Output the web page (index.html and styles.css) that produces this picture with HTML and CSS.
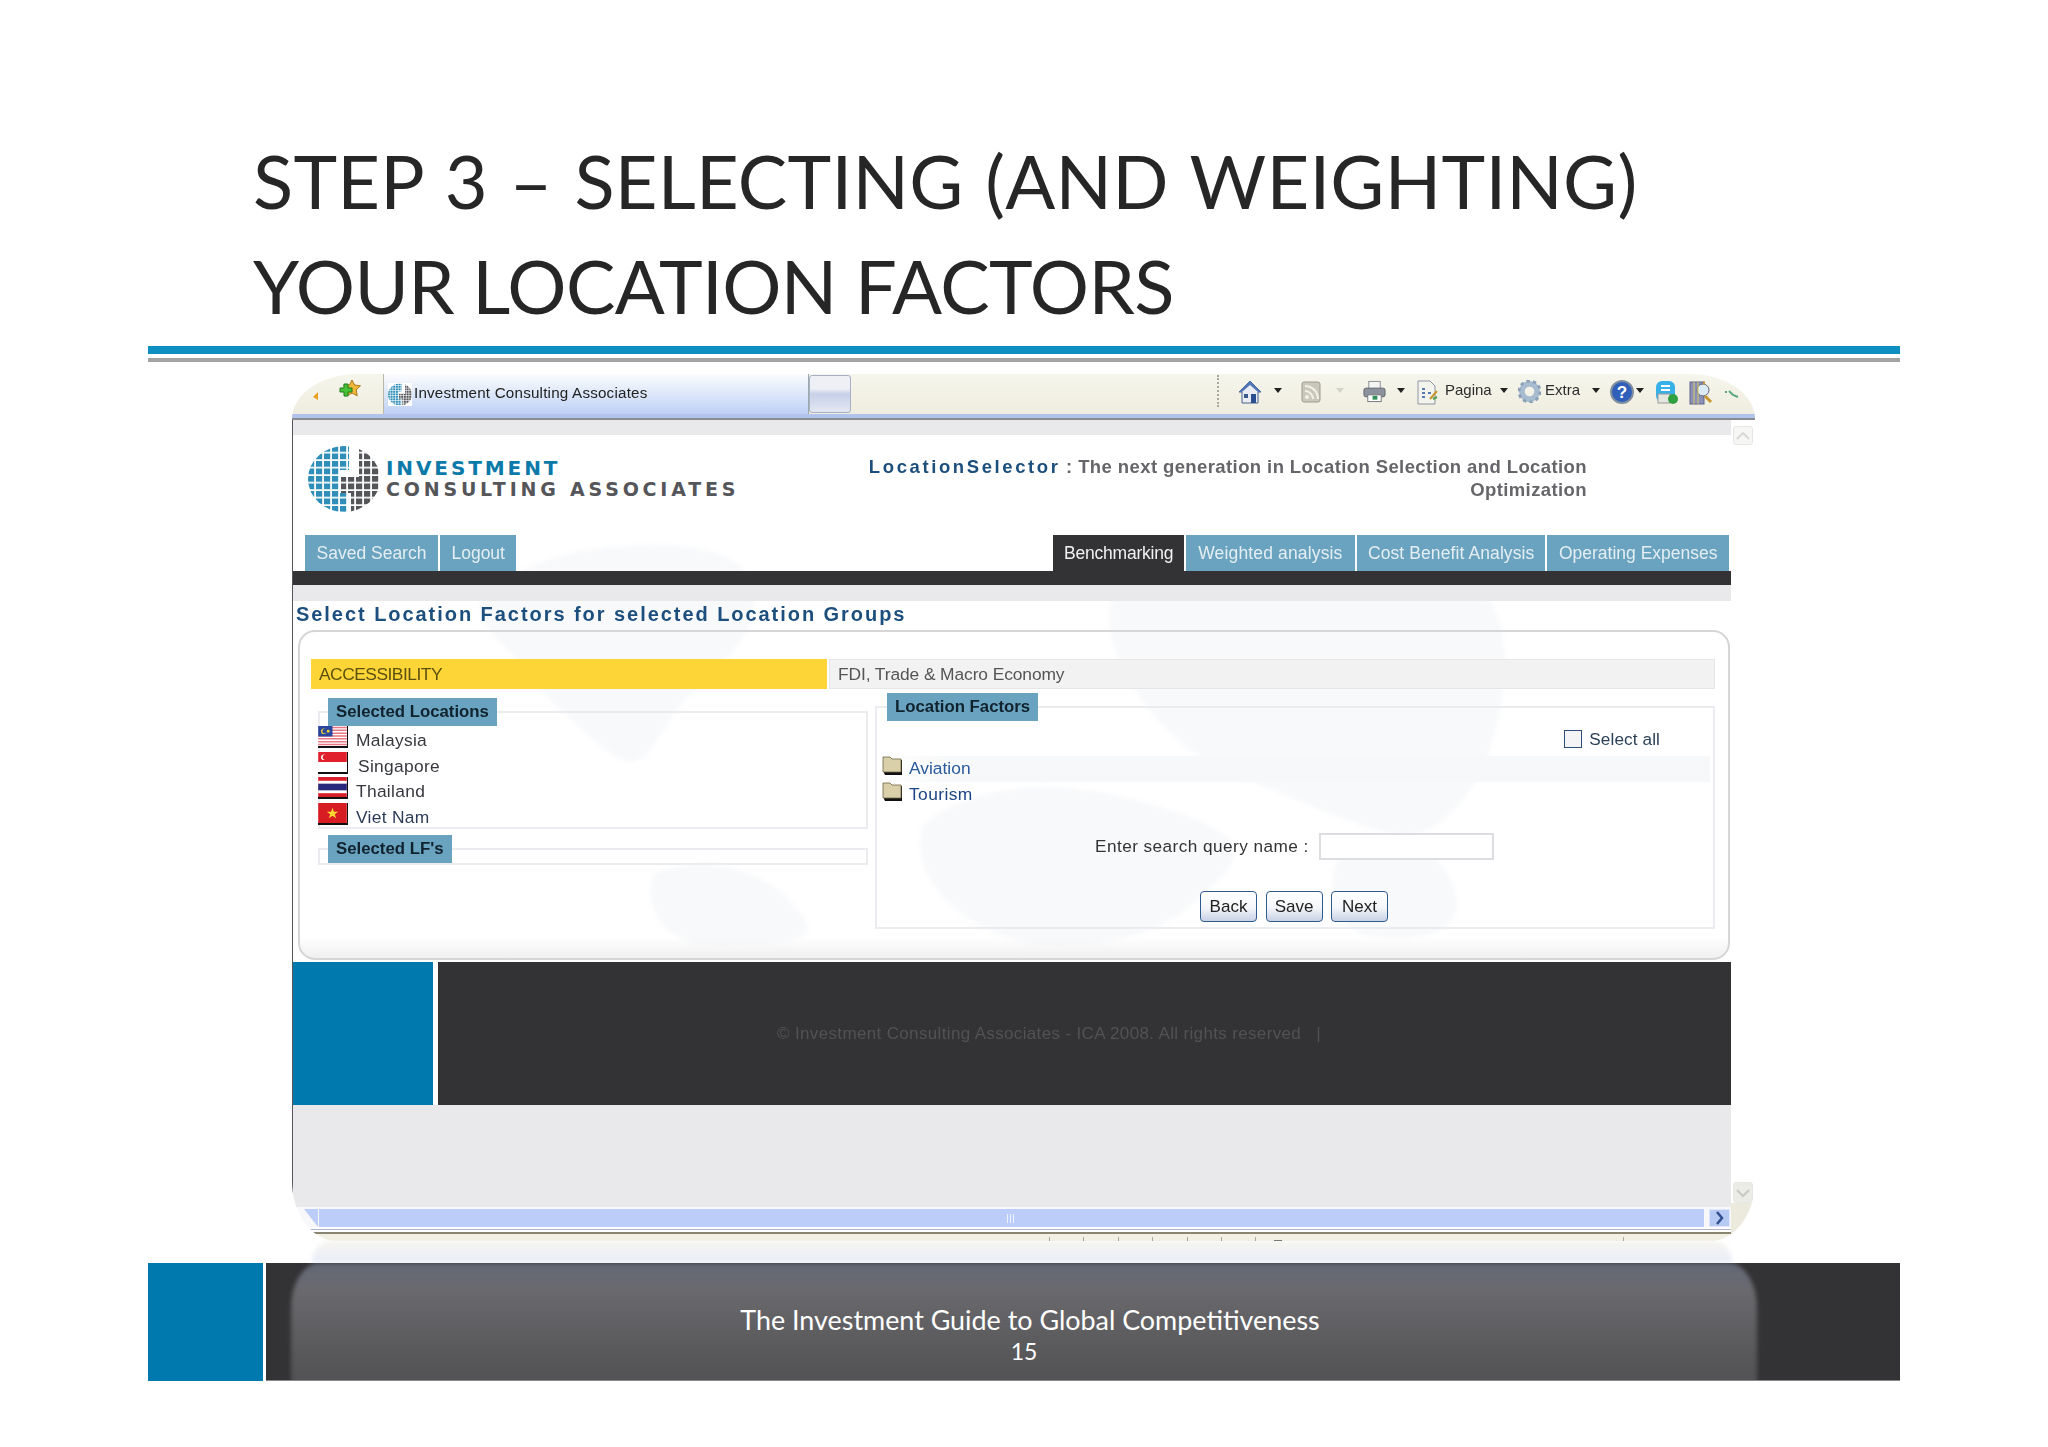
FILE: index.html
```html
<!DOCTYPE html>
<html lang="en">
<head>
<meta charset="utf-8">
<title>Step 3 - Selecting your location factors</title>
<link rel="stylesheet" href="styles.css">
</head>
<body>
<div class="slide">
  <h1 class="title"><span class="title-1">STEP 3 – SELECTING (AND WEIGHTING)</span><br><span class="title-2">YOUR LOCATION FACTORS</span></h1>
  <div class="rule-blue"></div>
  <div class="rule-grey"></div>

  <div class="window">
    <div class="browser">
      <div class="browser-main">
        <svg class="ic-back" viewBox="0 0 6 8"><path d="M5 0 L0 5 L5 8Z" fill="#e8a020"/></svg>
        <svg class="ic-fav" viewBox="0 0 24 20"><path d="M14 1 l2.500 5 6 .800 -4.300 4 1 6 -5.200 -2.800 -5.200 2.800 1-6 -4.300-4 6-.800Z" fill="#f0b838" stroke="#a87818"/><path d="M5 6h4v-4h4v4h4v4h-4v4H9v-4H5Z" transform="translate(-3 3)" fill="#48c038" stroke="#1c7a18"/></svg>
        <div class="tab-active">
          <svg class="ic-favicon" viewBox="0 0 72 66"><use href="#globe"/></svg>
          <span>Investment Consulting Associates</span>
        </div>
        <div class="tab-new"></div>
        <div class="tools">
          <div class="dots"></div>
          <svg class="ic" viewBox="0 0 24 24"><path d="M12 1 L23 12 H20 V23 H4 V12 H1Z" fill="#e9edf3" stroke="#46608c"/><path d="M12 1 L23 12 H20 L12 5 4 12 H1Z" fill="#5278b8"/><rect x="13" y="14" width="5" height="9" fill="#2a4f8e"/><rect x="6" y="14" width="4" height="4" fill="#3c5a8a"/></svg>
          <i class="arr a1"></i>
          <svg class="ic ic-rss" viewBox="0 0 20 22"><rect x="1" y="1" width="18" height="20" rx="2" fill="#c9c8bb" stroke="#9d9c90"/><circle cx="6" cy="16" r="2" fill="#f2f1e8"/><path d="M4 10a8 8 0 0 1 8 8M4 5a13 13 0 0 1 13 13" stroke="#f2f1e8" stroke-width="2" fill="none"/></svg>
          <i class="arr a2"></i>
          <svg class="ic ic-print" viewBox="0 0 24 23"><rect x="6" y="1" width="12" height="8" fill="#f4f4f4" stroke="#8a8f98"/><rect x="1" y="8" width="22" height="9" rx="2" fill="#8c929c" stroke="#5f646c"/><rect x="5" y="15" width="14" height="7" fill="#fff" stroke="#777"/><rect x="10" y="16" width="5" height="4" fill="#2f8f58"/></svg>
          <i class="arr a3"></i>
          <svg class="ic ic-page" viewBox="0 0 22 25"><path d="M1 1h12l5 5v18H1Z" fill="#f4f4ee" stroke="#8d93a3"/><path d="M5 9h3M5 13h3M5 17h3M11 13h3" stroke="#5a7ab0" stroke-width="2"/><path d="M13 19l7-8" stroke="#c89830" stroke-width="2"/><path d="M16 19l4-2" stroke="#50a050" stroke-width="2"/></svg>
          <span class="tool-text t1">Pagina</span>
          <i class="arr a4"></i>
          <svg class="ic ic-gear" viewBox="0 0 24 24"><circle cx="12" cy="12" r="8" fill="none" stroke="#a8bcd0" stroke-width="6"/><circle cx="12" cy="12" r="11" fill="none" stroke="#8ba0b8" stroke-width="3" stroke-dasharray="3.500 3.400"/></svg>
          <span class="tool-text t2">Extra</span>
          <i class="arr a5"></i>
          <svg class="ic ic-help" viewBox="0 0 24 24"><circle cx="12" cy="12" r="11" fill="#2f5fb8" stroke="#7f8f9f" stroke-width="2"/><text x="12" y="18" text-anchor="middle" class="qm">?</text></svg>
          <i class="arr a6"></i>
          <svg class="ic ic-skype" viewBox="0 0 24 25"><rect x="1" y="1" width="19" height="21" rx="6" fill="#38b0e8"/><rect x="3" y="14" width="12" height="9" fill="#e6e6e0" stroke="#999"/><path d="M6 6h9M6 10h9" stroke="#fff" stroke-width="2"/><circle cx="18" cy="19" r="5" fill="#30a040"/></svg>
          <svg class="ic ic-book" viewBox="0 0 24 25"><rect x="1" y="2" width="14" height="22" fill="#8a90b8" stroke="#60648a"/><circle cx="14" cy="10" r="6" fill="#dceaf4" stroke="#667"/><path d="M14 3h2M16 16l6 6" stroke="#c89830" stroke-width="3"/><path d="M5 2v22M9 2v22" stroke="#d8c860" stroke-width="1"/></svg>
          <svg class="ic ic-leaf" viewBox="0 0 16 10"><path d="M1 3h2M5 2l4 4 5 2" stroke="#58a880" stroke-width="2" fill="none"/></svg>
        </div>
      </div>
      <div class="browser-rule"></div>
    </div>

    <div class="view">
      <div class="page">
        <svg class="map" viewBox="0 0 1439 410" preserveAspectRatio="none" aria-hidden="true">
          <path d="M190 60 C240 20 300 10 360 10 C430 10 470 30 460 80 C450 120 400 150 380 180 C360 210 350 240 320 220 C280 190 240 150 220 120 C200 100 180 80 190 60Z"/>
          <path d="M360 340 C400 320 470 330 500 370 C530 400 520 410 420 410 C370 410 350 370 360 340Z"/>
          <path d="M630 290 C680 250 760 240 860 270 C930 290 960 310 930 340 C890 380 860 410 760 410 C690 410 610 350 630 290Z"/>
          <path d="M820 60 C880 10 1000 10 1100 20 C1180 30 1220 60 1210 150 C1205 230 1160 300 1110 300 C1050 290 1000 260 940 240 C870 210 800 120 820 60Z"/>
          <path d="M1050 320 C1090 300 1140 300 1160 350 C1180 400 1120 410 1070 400 C1040 390 1030 340 1050 320Z"/>
        </svg>
        <div class="strip"></div>
        <header class="head">
          <div class="logo">
            <svg class="globe" viewBox="0 0 72 66">
              <defs>
                <pattern id="pb" width="8" height="7.500" patternUnits="userSpaceOnUse"><rect width="6.200" height="5.800" fill="#2f8fb8"/></pattern>
                <pattern id="pd" width="8" height="7.500" patternUnits="userSpaceOnUse"><rect width="6.200" height="5.800" fill="#55565a"/></pattern>
                <clipPath id="round"><ellipse cx="36" cy="33" rx="36" ry="33"/></clipPath>
                <g id="globe">
                  <g clip-path="url(#round)">
                    <path d="M0 0H41V24H31V47H40V66H0Z" fill="url(#pb)"/>
                    <path d="M51 0H72V66H43V47H33V31H51Z" fill="url(#pd)"/>
                  </g>
                </g>
              </defs>
              <use href="#globe"/>
            </svg>
            <div class="logo-text">
              <span class="logo-1">INVESTMENT</span>
              <span class="logo-2">CONSULTING ASSOCIATES</span>
            </div>
          </div>
          <p class="tagline"><b>LocationSelector</b> : The next generation in Location Selection and Location<br>Optimization</p>
        </header>
        <nav class="nav">
          <a class="tab">Saved Search</a>
          <a class="tab">Logout</a>
          <a class="tab current">Benchmarking</a>
          <a class="tab tab-weighted">Weighted analysis</a>
          <a class="tab tab-cost">Cost Benefit Analysis</a>
          <a class="tab">Operating Expenses</a>
        </nav>
        <div class="darkbar"></div>
        <div class="strip strip2"></div>
        <h2 class="heading">Select Location Factors for selected Location Groups</h2>

        <section class="panel">
          <div class="cats">
            <div class="cat cat-on">ACCESSIBILITY</div>
            <div class="cat cat-off">FDI, Trade &amp; Macro Economy</div>
          </div>
          <div class="cols">
            <div class="col-left">
              <fieldset class="fs fs-loc">
                <legend>Selected Locations</legend>
                <div class="loc">
                  <svg class="flag" viewBox="0 0 30 21"><rect width="30" height="21" fill="#fff"/><path d="M0 1.500h30M0 4.500h30M0 7.500h30M0 10.500h30M0 13.500h30M0 16.500h30M0 19.500h30" stroke="#e87884" stroke-width="1.600"/><rect width="15" height="11" fill="#2848a0"/><circle cx="6" cy="5.500" r="3" fill="#f0d030"/><circle cx="7" cy="5.500" r="2.500" fill="#2848a0"/><circle cx="10.500" cy="5.500" r="1.500" fill="#f0d030"/></svg>
                  <span>Malaysia</span>
                </div>
                <div class="loc loc-sg">
                  <svg class="flag" viewBox="0 0 30 21"><rect width="30" height="21" fill="#fff"/><rect width="30" height="10.500" fill="#e0202c"/><circle cx="6" cy="5.500" r="3" fill="#fff"/><circle cx="7.500" cy="5.500" r="2.800" fill="#e0202c"/></svg>
                  <span>Singapore</span>
                </div>
                <div class="loc">
                  <svg class="flag" viewBox="0 0 30 21"><rect width="30" height="21" fill="#d8202c"/><rect y="4" width="30" height="13" fill="#fff"/><rect y="7" width="30" height="7" fill="#28287c"/></svg>
                  <span>Thailand</span>
                </div>
                <div class="loc">
                  <svg class="flag" viewBox="0 0 30 21"><rect width="30" height="21" fill="#d81c24"/><path d="M15 5l1.500 4.200h4.500l-3.600 2.600 1.400 4.200-3.800-2.600-3.800 2.600 1.400-4.200L9 9.200h4.500Z" fill="#ffd830"/></svg>
                  <span class="vn">Viet Nam</span>
                </div>
              </fieldset>
              <fieldset class="fs fs-lf">
                <legend>Selected LF's</legend>
              </fieldset>
            </div>
            <fieldset class="fs fs-right">
              <legend>Location Factors</legend>
              <label class="select-all"><i class="check"></i>Select all</label>
              <div class="tree tree-first">
                <svg class="folder" viewBox="0 0 22 19"><path d="M2 17V2h7l2 2h9v15H3Z" fill="#111"/><path d="M1 16V1h7l2 2h9v13Z" fill="#d9cfa8" stroke="#6e6848" stroke-width=".8"/></svg>
                <span>Aviation</span>
              </div>
              <div class="tree">
                <svg class="folder" viewBox="0 0 22 19"><path d="M2 17V2h7l2 2h9v15H3Z" fill="#111"/><path d="M1 16V1h7l2 2h9v13Z" fill="#d9cfa8" stroke="#6e6848" stroke-width=".8"/></svg>
                <span class="tourism">Tourism</span>
              </div>
              <div class="search">
                <span>Enter search query name :</span>
                <div class="input"></div>
              </div>
              <div class="buttons">
                <button class="btn">Back</button>
                <button class="btn">Save</button>
                <button class="btn">Next</button>
              </div>
            </fieldset>
          </div>
        </section>

        <footer class="site-foot">
          <div class="foot-blue"></div>
          <div class="foot-dark">© Investment Consulting Associates - ICA 2008. All rights reserved &nbsp; |</div>
        </footer>
        <div class="fill"></div>
        <div class="hscroll">
          <div class="hs-left"></div>
          <div class="hs-track"><i></i><i></i><i></i></div>
          <div class="hs-btn"><svg viewBox="0 0 10 14"><path d="M2 1l5 6-5 6" fill="none" stroke="#304e90" stroke-width="2.500"/></svg></div>
        </div>
        <div class="hs-lines">
          <div class="ticks"><i></i><i></i><i></i><i></i><i></i><i></i><i></i><i class="tick-dash"></i><i class="tick-end"></i></div>
        </div>
      </div>
      <aside class="vscroll">
        <div class="vs-btn"><svg viewBox="0 0 14 10"><path d="M1 8l6-6 6 6" fill="none" stroke="#d8d8d8" stroke-width="2"/></svg></div>
        <div class="vs-btn vs-down"><svg viewBox="0 0 14 10"><path d="M1 2l6 6 6-6" fill="none" stroke="#c8c8c8" stroke-width="2"/></svg></div>
      </aside>
    </div>
  </div>

  <div class="reflection"></div>

  <footer class="slide-foot">
    <div class="sf-blue"></div>
    <div class="sf-dark">
      <div class="glass">
        <p class="sf-line">The Investment Guide to Global Competitiveness</p>
        <p class="sf-num">15</p>
      </div>
    </div>
  </footer>
</div>
</body>
</html>
```

FILE: styles.css
```css
* { box-sizing: border-box; }
html, body { margin: 0; padding: 0; background: #fff; }
body { width: 2048px; height: 1447px; overflow: hidden; font-family: "Liberation Sans", Arial, sans-serif; }

.slide { width: 2048px; height: 1447px; padding-top: 129px; display: flex; flex-direction: column; }
.title { margin: 0 0 0 253px; padding-bottom: 1px; font: 400 74px/105px Lato, "Open Sans", sans-serif; color: #262626; height: 217px; white-space: nowrap; transform: translateY(-1px); }
.title-1 { word-spacing: 2.5px; letter-spacing: .25px; }
.title-2 { letter-spacing: -.6px; }
.rule-blue { margin-left: 148px; width: 1752px; height: 8px; flex: none; background: #0d8fc2; }
.rule-grey { margin: 4px 0 0 148px; width: 1752px; height: 4px; flex: none; background: #a3a3a3; }

.window { margin: 12px 0 0 292px; width: 1463px; height: 867px; flex: none; display: flex; flex-direction: column; overflow: hidden; background: #fff; border-radius: 65px 65px 45px 45px / 45px 45px 60px 60px; }

.browser { height: 46px; flex: none; display: flex; flex-direction: column; background: linear-gradient(#f6f5ec, #eeecdd); }
.browser-main { height: 40px; display: flex; align-items: flex-start; position: relative; }
.browser-rule { height: 6px; background: #b3c4ec; border-bottom: 2px solid #8a8a92; }
.ic-back { width: 6px; height: 8px; margin: 18px 0 0 21px; }
.ic-fav { width: 24px; height: 20px; margin: 5px 0 0 19px; }
.tab-active { width: 426px; height: 40px; margin-left: 21px; padding: 9px 0 0 4px; display: flex; align-items: flex-start; gap: 2px; background: linear-gradient(#fbfcfe, #e6eefa 35%, #bdd0f5); border-left: 1px solid #b8b8a8; border-right: 1px solid #9aa; }
.tab-active span { font-size: 15.2px; line-height: 20px; letter-spacing: .2px; color: #222; filter: blur(.3px); }
.ic-favicon { width: 24px; height: 23px; background: #fff; }
.tab-new { width: 42px; height: 38px; margin-top: 1px; background: linear-gradient(#eef0f5, #eef0f5 35%, #c7d0e8 50%, #e4e8f2); border: 1px solid #a8b0c4; border-radius: 3px; }
.tools { flex: 1; height: 40px; position: relative; margin-left: 2px; }
.dots { position: absolute; left: 364px; top: 1px; height: 32px; border-left: 2px dotted #a8a89c; }
.ic { position: absolute; top: 6px; width: 24px; height: 24px; left: 385px; }
.ic-rss { left: 448px; width: 20px; height: 22px; top: 7px; }
.ic-print { left: 510px; width: 23px; height: 23px; }
.ic-page { left: 564px; width: 22px; height: 25px; }
.ic-gear { left: 665px; width: 23px; height: 23px; }
.ic-help { left: 757px; }
.ic-skype { left: 802px; height: 25px; }
.ic-book { left: 836px; height: 25px; }
.ic-leaf { left: 871px; top: 15px; width: 16px; height: 10px; }
.qm { font: 700 17px "Liberation Sans", sans-serif; fill: #fff; }
.arr { position: absolute; top: 14px; width: 0; height: 0; border: 4px solid transparent; border-top: 5px solid #222; border-bottom: 0; }
.a1 { left: 421px; } .a2 { left: 483px; border-top-color: #d4d3c8; } .a3 { left: 544px; } .a4 { left: 647px; } .a5 { left: 739px; } .a6 { left: 783px; }
.tool-text { position: absolute; top: 6px; font-size: 15px; line-height: 20px; color: #2c2c2c; filter: blur(.3px); }
.t1 { left: 592px; } .t2 { left: 692px; }

.view { flex: 1; display: flex; min-height: 0; }
.page { width: 1439px; flex: none; display: flex; flex-direction: column; position: relative; border-left: 1px solid #55555a; background: #fff; }
.map { position: absolute; left: 0; top: 115px; width: 1439px; height: 410px; z-index: 0; filter: blur(2px); }
.map path { fill: #f8f9fb; }
.page > * { position: relative; z-index: 1; }
.page > .map { position: absolute; z-index: 0; }
.strip { height: 15px; flex: none; background: #e9e8ea; }
.strip2 { height: 16px; }

.head { height: 100px; flex: none; display: flex; }
.logo { display: flex; width: 575px; padding: 11px 0 0 15px; }
.globe { width: 72px; height: 66px; flex: none; }
.logo-text { margin: 12px 0 0 6px; display: flex; flex-direction: column; font-family: "DejaVu Sans", sans-serif; font-weight: 700; }
.logo-1 { font-size: 20px; line-height: 21px; letter-spacing: 2.9px; color: #0c7aa8; white-space: nowrap; }
.logo-2 { font-size: 19px; line-height: 21px; letter-spacing: 3.8px; color: #55565a; white-space: nowrap; }
.tagline { margin: 21px 0 0; width: 719px; text-align: right; font-size: 18.5px; line-height: 22.500px; font-weight: 700; letter-spacing: .4px; color: #66666a; white-space: nowrap; filter: blur(.35px); }
.tagline b { color: #1c4f7c; letter-spacing: 2.6px; }

.nav { height: 36px; flex: none; display: flex; padding-left: 12px; gap: 2px; }
.tab { height: 36px; padding: 0 11.5px; font-size: 17.5px; line-height: 36px; color: #e4eef2; background: #6aa3bf; white-space: nowrap; filter: blur(.3px); }
.tab.current { margin-left: auto; padding: 0 10.5px; letter-spacing: -.2px; background: #333234; color: #f2f2f2; }
.tab-weighted { padding: 0 12.4px; letter-spacing: .15px; }
.tab-cost { padding: 0 11px; letter-spacing: .1px; }
.tab:last-child { margin-right: 2px; }
.darkbar { height: 14px; flex: none; background: #333234; }
.heading { margin: 0; height: 29px; flex: none; padding: 2px 0 0 3px; font-size: 20px; line-height: 22px; font-weight: 700; letter-spacing: 1.95px; color: #1d4f7e; white-space: nowrap; filter: blur(.3px); }

.panel { height: 330px; flex: none; margin: 0 1px 0 5px; padding: 27px 13px 0 11px; border: 2px solid #d6d6d8; border-radius: 17px; background: linear-gradient(transparent 305px, #eeeeee 328px); }
.cats { display: flex; gap: 2px; height: 30px; }
.cat { font-size: 17.4px; line-height: 30px; white-space: nowrap; filter: blur(.3px); }
.cat-on { width: 516px; padding-left: 8px; background: #fdd537; color: #5c5010; letter-spacing: -.5px; }
.cat-off { flex: 1; padding-left: 8px; background: #f2f2f2; border: 1px solid #e6e6e6; line-height: 28px; color: #555; letter-spacing: -.1px; }
.cols { display: flex; gap: 7px; padding-left: 7px; align-items: flex-start; }
.col-left { width: 550px; flex: none; }
.fs { margin: 0; padding: 0; border: 2px solid #eaecf0; min-width: 0; }
legend { margin-left: 8px; padding: 0 8px 0 8px; height: 28px; font-size: 16.8px; line-height: 28px; font-weight: 700; color: #10222e; background: #6aa3bf; white-space: nowrap; filter: blur(.3px); }
.fs-loc { margin-top: 9px; height: 131px; }
.fs-lf { margin-top: 6px; height: 29px; }
.loc { height: 25.700px; margin-left: -2px; display: flex; gap: 8px; font-size: 17.4px; letter-spacing: .3px; color: #36383e; }
.loc span { line-height: 29px; filter: blur(.3px); }
.loc-sg span { margin-left: 2px; }
.vn { color: #2c3c58; }
.flag { width: 30px; height: 22px; flex: none; border: solid #111; border-width: 0 1px 2px 0; }

.fs-right { flex: 1; margin-top: 4px; height: 236px; }
.fs-right legend { margin-left: 10px; }
.select-all { display: flex; justify-content: flex-end; align-items: center; gap: 7px; height: 18px; margin: 9px 53px 0 0; font-size: 17.2px; letter-spacing: .1px; color: #2c4058; filter: blur(.3px); }
.check { width: 18px; height: 18px; border: 1.500px solid #2d4f7a; background: #f4f4f6; }
.tree { display: flex; height: 26px; margin-left: 5px; gap: 5px; font-size: 17.4px; color: #2b5a9c; }
.tree span { line-height: 25px; filter: blur(.3px); }
.tree-first { margin: 8px 3px 0 5px; background: linear-gradient(90deg, transparent, #f7f8f9 8%); }
.tourism { color: #1c4584; letter-spacing: .4px; }
.folder { width: 22px; height: 19px; flex: none; }
.search { display: flex; gap: 10px; align-items: center; height: 27px; margin: 25px 0 0 218px; font-size: 17.2px; letter-spacing: .45px; color: #333; }
.search span { filter: blur(.3px); white-space: nowrap; }
.input { width: 175px; height: 27px; background: #fff; border: 2px solid #dcdde0; }
.buttons { display: flex; gap: 8.500px; margin: 31px 0 0 323px; }
.btn { width: 57px; height: 31px; padding: 0; font: 400 17px/28px "Liberation Sans", sans-serif; color: #222; background: linear-gradient(#fff, #f4f6fa 55%, #c8d2e6); border: 1.500px solid #2f5a8c; border-radius: 4px; filter: blur(.25px); }

.site-foot { margin-top: 2px; height: 143px; flex: none; display: flex; gap: 5px; }
.foot-blue { width: 140px; background: #0079ae; }
.foot-dark { flex: 1; padding: 62px 0 0 339px; font-size: 17px; line-height: 20px; letter-spacing: .35px; color: #525254; background: #333234; white-space: nowrap; filter: blur(.3px); }
.fill { flex: 1; background: #e9e8ea; }
.hscroll { height: 20px; flex: none; display: flex; align-items: stretch; padding: 2px 1px 0 11px; background: #f8f8fb; }
.hs-left { width: 14px; background: #bccdfa; margin-right: 1px; clip-path: polygon(0 0, 100% 0, 100% 100%); }
.hs-track { flex: 1; background: #bccdfa; display: flex; justify-content: center; gap: 2px; align-items: center; padding-right: 2px; }
.hs-track i { width: 1px; height: 9px; background: #eef3ff; }
.hs-btn { width: 21px; margin-left: 5px; background: #b7caf4; border: 1px solid #dfe6fa; display: flex; align-items: center; justify-content: center; }
.hs-btn svg { width: 10px; height: 14px; }
.hs-lines { height: 14px; flex: none; padding: 10px 0 0 756px; background: linear-gradient(#fff 0 2px, #aeb6d0 2px 3px, #fff 3px 5px, #8a8570 5px 7px, #f2f0e4 7px); }
.ticks { display: flex; gap: 33.400px; height: 4px; }
.ticks i { width: 1px; height: 4px; background: #aaa89a; }
.ticks .tick-dash { width: 8px; height: 1px; margin: 3px 0 0 -16px; background: #777; }
.ticks .tick-end { margin-left: 308px; }

.vscroll { flex: 1; display: flex; flex-direction: column; justify-content: space-between; padding: 6px 2px 38px 2px; border-right: 1px solid #e2e2e0; background: linear-gradient(#fff 0 783px, #eceadc 783px); }
.vs-btn { height: 19px; width: 20px; display: flex; align-items: center; justify-content: center; background: #f6f6f4; border: 1px solid #e6e6e4; border-radius: 3px; }
.vs-btn svg { width: 14px; height: 10px; }
.vs-down { height: 21px; background: #ecece6; }

.reflection { margin-left: 312px; width: 1420px; height: 22px; flex: none; background: linear-gradient(#f5f4ec, #f1f2f6 50%, #e9edfa); border-radius: 20px 20px 0 0; filter: blur(2px); }

.slide-foot { height: 118px; flex: none; display: flex; padding-left: 148px; position: relative; }
.sf-blue { width: 115px; background: #0079ae; }
.sf-dark { width: 1634px; margin-left: 3px; background: #333234; border-bottom: 1px solid #888; position: relative; overflow: hidden; }
.glass { position: absolute; left: 25px; top: 0; width: 1466px; height: 117px; padding-top: 42px; text-align: center; color: #fff; }
.glass::before { content: ""; position: absolute; left: 0; top: 0; right: 0; bottom: -4px; border-radius: 28px 28px 0 0 / 45px 45px 0 0; background: linear-gradient(#646878, #6a6a6e 22%, #5a5a5d 70%, #525255); filter: blur(2px); }
.sf-line, .sf-num { position: relative; }
.sf-line { margin: 0 0 0 12px; font: 400 26.9px/30px Lato, "Open Sans", sans-serif; }
.sf-num { margin: 1px 0 0 0; font: 400 23px/30px Lato, "Open Sans", sans-serif; }
```
